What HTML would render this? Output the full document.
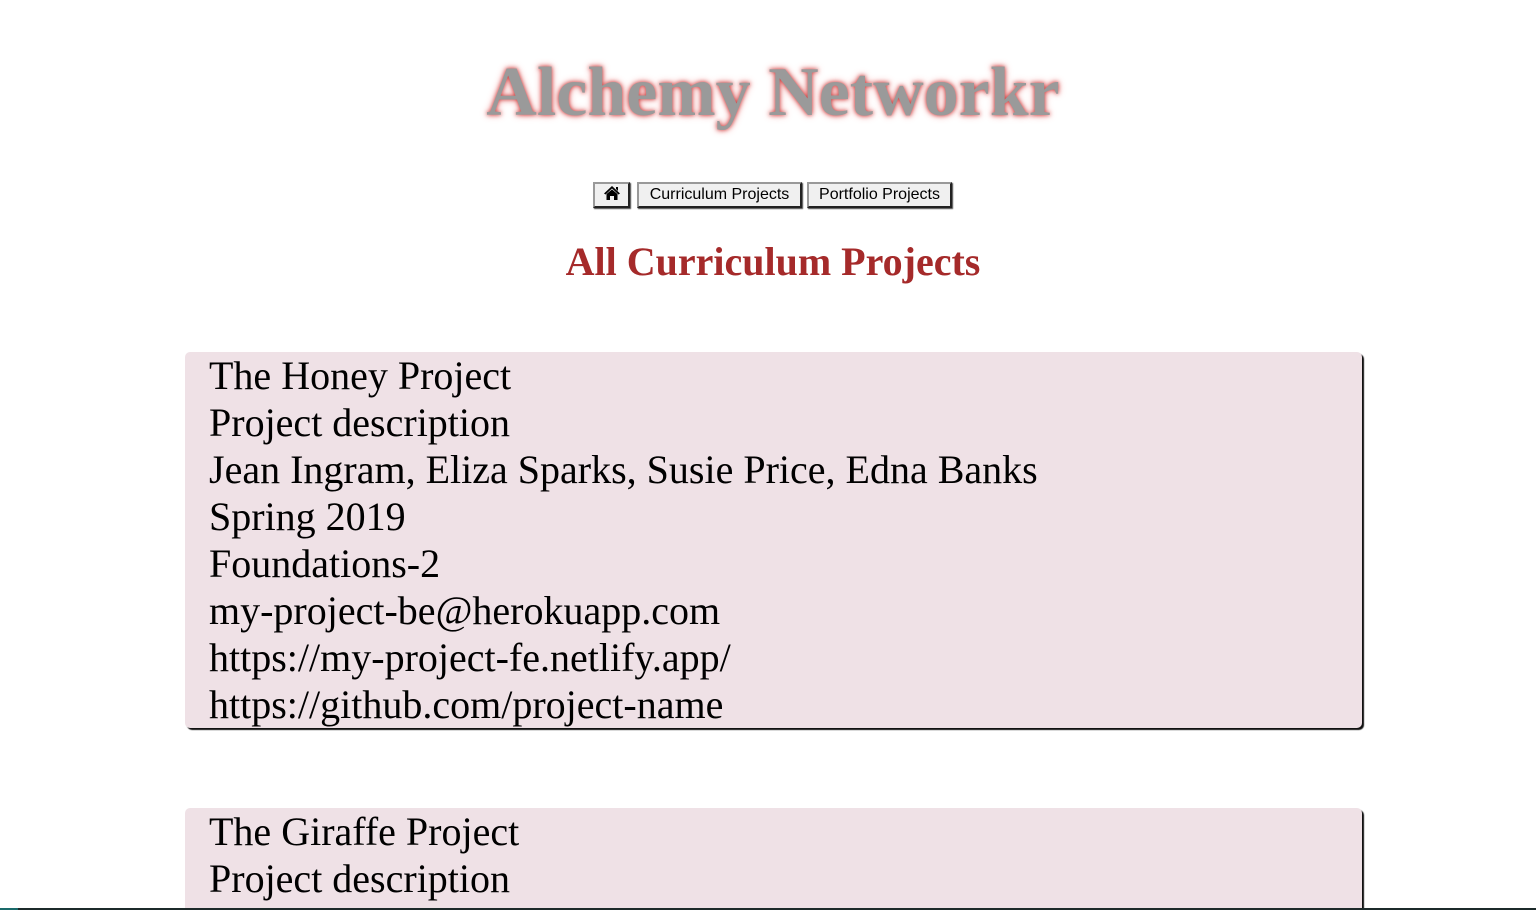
<!DOCTYPE html>
<html style="overflow:hidden;height:910px"><head><style>
body{margin:0;background:#fff;width:1536px;height:910px;overflow:hidden;position:relative;font-family:"Liberation Serif",serif}
h1{position:absolute;top:53px;left:0;width:1546px;margin:0;text-align:center;font-size:70px;font-weight:bold;color:#9a9a9a;text-shadow:0 0 4px #c33,0 0 8px #e99;line-height:80px}
.nav span{position:absolute;top:182px;height:26px;box-sizing:border-box;border:2px solid;border-color:#999 #222 #222 #999;background:#f0f0f0;font:16px "Liberation Sans",sans-serif;line-height:22px;text-align:center;box-shadow:1px 1px 1px #444;color:#000}
h2{position:absolute;top:239px;left:0;width:1546px;margin:0;text-align:center;font-size:40px;color:#a52a2a;line-height:46px}
.card{position:absolute;left:185px;width:1177px;background:#efe1e6;border-radius:5px;box-shadow:2px 2px 1px #111;font-size:40px;line-height:47px;padding:0 0 0 24px;box-sizing:border-box;overflow:hidden}
.bar{position:absolute;left:0;top:908px;width:1536px;height:2px;background:#1c2a2a;z-index:5}
</style></head><body>
<h1>Alchemy Networkr</h1>
<div class="nav"><span style="left:593px;width:37px"><svg width="18" height="16" viewBox="0 0 18 16" style="vertical-align:-2px"><path d="M9 1 L1 8.5 L2.5 9.5 L9 3.5 L15.5 9.5 L17 8.5 Z M13 2 h2 v4 l-2-2z M3.5 9 L9 4.5 L14.5 9 V15 H11 V11 H7 V15 H3.5Z" fill="#000"/></svg></span><span style="left:637px;width:165px">Curriculum Projects</span><span style="left:807px;width:145px">Portfolio Projects</span></div>
<h2>All Curriculum Projects</h2>
<div class="card" style="top:352px;height:376px">The Honey Project<br>Project description<br>Jean Ingram, Eliza Sparks, Susie Price, Edna Banks<br>Spring 2019<br>Foundations-2<br>my-project-be@herokuapp.com<br>https://my-project-fe.netlify.app/<br>https://github.com/project-name</div>
<div class="card" style="top:808px;height:102px;border-radius:5px 5px 0 0">The Giraffe Project<br>Project description</div>
<div class="bar"></div><div style="position:absolute;left:0;top:908px;width:18px;height:2px;background:#1a6a6a;z-index:6"></div>
</body></html>
